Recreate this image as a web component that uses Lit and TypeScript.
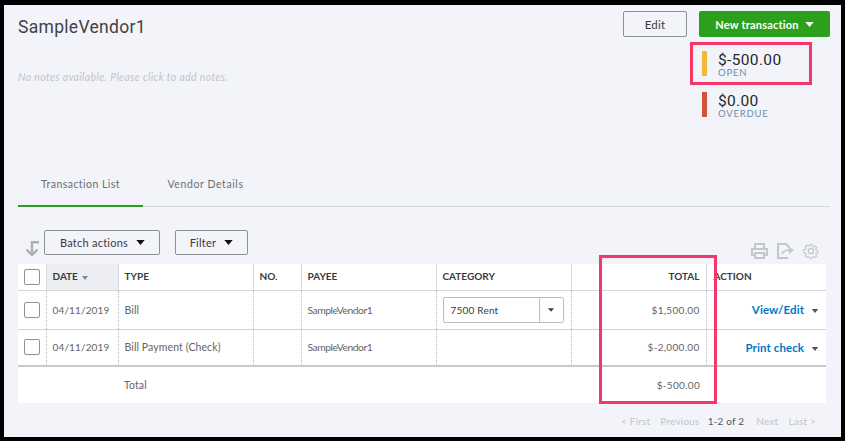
import { LitElement, html, css } from "lit";
import { customElement } from "lit/decorators.js";

const caret = html`<svg class="caret" viewBox="0 0 10 6" width="10" height="6"><path d="M0 0h10L5 6z" fill="currentColor"></path></svg>`;

@customElement("app-root")
export class AppRoot extends LitElement {
  static styles = css`
    :host { display: block; width: 845px; height: 441px; background: #000; box-sizing: border-box; padding: 5px 4px 4px 4px; font-family: Lato, "Open Sans", "Liberation Sans", sans-serif; position: relative; overflow: hidden; }
    .panel { background: #f3f4f9; height: 432px; box-sizing: border-box; padding: 0 11px 0 14px; display: flex; flex-direction: column; }
    .head { display: flex; justify-content: space-between; height: 156px; }
    .title { font: 400 17.5px/22px Roboto, sans-serif; letter-spacing: 0.3px; color: #404248; margin-top: 11px; }
    .notes { font-size: 10.5px; line-height: 12px; font-style: italic; color: #c2c4c8; margin-top: 33px; letter-spacing: 0.36px; }
    .right { display: flex; flex-direction: column; align-items: flex-start; width: 207px; }
    .btns { display: flex; gap: 12px; margin-top: 6px; }
    .edit { width: 64px; height: 26px; box-sizing: border-box; border: 1px solid #8d9096; border-radius: 2px; font-size: 11.5px; color: #393a3d; display: flex; align-items: center; justify-content: center; letter-spacing: 0.2px; }
    .new { width: 131px; height: 26px; box-sizing: border-box; background: #2ca01c; border-radius: 2px; color: #fff; font-size: 11px; font-weight: 700; letter-spacing: 0.2px; display: flex; align-items: center; justify-content: center; gap: 6px; }
    .new .caret { width: 9px; height: 5px; }
    .stat { display: flex; gap: 11px; margin-left: 79px; height: 25px; }
    .stat.first { margin-top: 14px; margin-bottom: 16px; }
    .bar { width: 5px; height: 25px; }
    .amt { font: 400 15.5px/15px Roboto, sans-serif; letter-spacing: 0.35px; color: #26282c; margin-top: 2px; }
    .lbl { font-size: 9.5px; line-height: 10px; letter-spacing: 0.8px; color: #6b8cae; }
    .tabs { display: flex; height: 46px; border-bottom: 1px solid #d4d7dc; box-sizing: border-box; }
    .tab { font-size: 10.5px; color: #6b6c72; line-height: 14px; padding-top: 16px; box-sizing: border-box; height: 46px; text-align: center; letter-spacing: 0.45px; }
    .tab.on { width: 125px; border-bottom: 2px solid #2ca01c; }
    .tab.off { width: 125px; letter-spacing: 0.6px; }
    .tools { display: flex; align-items: flex-end; height: 57px; padding-bottom: 9px; box-sizing: border-box; }
    .arrow { width: 14px; height: 15px; margin: 0 5px -1px 7px; }
    .tbtn { height: 25px; box-sizing: border-box; border: 1px solid #8d9096; border-radius: 2px; font-size: 11px; color: #393a3d; display: flex; align-items: center; justify-content: center; gap: 8px; letter-spacing: 0.25px; }
    .tbtn .caret { width: 9px; height: 5px; color: #111; }
    .batch { width: 116px; margin-right: 15px; padding-left: 1px; }
    .filter { width: 73px; }
    .icons { margin-left: auto; margin-right: 11px; display: flex; gap: 9px; color: #c3c6ca; margin-bottom: -4px; }
    table { width: 808px; border-collapse: collapse; table-layout: fixed; background: #fff; font-size: 10.5px; color: #636468; letter-spacing: 0.1px; }
    th { height: 26px; font-size: 10px; font-weight: 700; color: #393a3d; text-align: left; padding: 0 6px 1px; box-sizing: border-box; border-left: 1px solid #d8dade; border-bottom: 1px solid #d4d7dc; letter-spacing: 0; }
    td { padding: 0 6px; box-sizing: border-box; border-left: 1px dotted #b9bbbf; border-bottom: 1px solid #d0d2d6; white-space: nowrap; }
    tr.r1 td { height: 39px; }
    tr.r2 td { height: 37px; border-bottom: 2px solid #c8cacd; }
    tr.tot td { height: 37px; border: none; }
    th:first-child, td:first-child { border-left: none; padding: 0; }
    th.date { background: #eceef1; }
    th.date svg { width: 6px; height: 4px; color: #6b8cae; margin-left: 2px; }
    td.dt { font-size: 10px; letter-spacing: 0.15px; }
    td.py { font-size: 10.3px; letter-spacing: -0.45px; }
    .num { text-align: right; font-size: 10px; letter-spacing: 0.3px; }
    th.num { letter-spacing: 0; }
    .cb { width: 16px; height: 16px; box-sizing: border-box; border: 1px solid #8d9096; border-radius: 2px; margin-left: 6px; background: #fff; display: block; }
    .sel { display: flex; width: 121px; height: 26px; box-sizing: border-box; border: 1px solid #babec5; border-radius: 2px; align-items: center; color: #393a3d; font-size: 10px; letter-spacing: 0.2px; }
    .sel span { flex: 1; padding-left: 7px; }
    .sel i { width: 23px; height: 24px; border-left: 1px solid #babec5; display: flex; align-items: center; justify-content: center; color: #393a3d; }
    .sel .caret { width: 6px; height: 4px; }
    .act { text-align: right; padding-right: 7px; color: #0077c5; font-size: 11.5px; font-weight: 700; }
    .act .caret { width: 8px; height: 4px; color: #55575c; margin: 0 0 1px 4px; }
    .act-head { padding-left: 7px; }
    .pager { display: flex; justify-content: flex-end; gap: 10px; font-size: 10px; color: #c1c3c8; margin-top: 12px; padding-right: 14px; line-height: 13px; letter-spacing: 0.2px; }
    .pager b { font-weight: 400; color: #55575c; margin: 0 2px 0 -2px; }
    .mark { position: absolute; border: 3px solid #f5386b; box-sizing: border-box; pointer-events: none; }
    .m1 { left: 690px; top: 42px; width: 122px; height: 43px; }
    .m2 { left: 599px; top: 255px; width: 118px; height: 149px; }
  `;

  render() {
    return html`
      <div class="panel">
        <div class="head">
          <div>
            <div class="title">SampleVendor1</div>
            <div class="notes">No notes available. Please click to add notes.</div>
          </div>
          <div class="right">
            <div class="btns">
              <div class="edit">Edit</div>
              <div class="new">New transaction ${caret}</div>
            </div>
            <div class="stat first">
              <div class="bar" style="background:#f4b73a"></div>
              <div><div class="amt">$-500.00</div><div class="lbl">OPEN</div></div>
            </div>
            <div class="stat">
              <div class="bar" style="background:#d1533a"></div>
              <div><div class="amt">$0.00</div><div class="lbl">OVERDUE</div></div>
            </div>
          </div>
        </div>
        <div class="tabs">
          <div class="tab on">Transaction List</div>
          <div class="tab off">Vendor Details</div>
        </div>
        <div class="tools">
          <svg class="arrow" viewBox="0 0 14 15" fill="none" stroke="#adafb3" stroke-width="2.4"><path d="M14 1.2H7v12.5M1.5 8.5L7 14l5.5-5.5"></path></svg>
          <div class="tbtn batch">Batch actions ${caret}</div>
          <div class="tbtn filter">Filter ${caret}</div>
          <div class="icons">
            <svg width="17" height="16" viewBox="0 0 17 16" fill="none" stroke="currentColor" stroke-width="2"><path d="M4 5V1h9v4M4 12H1V6h15v6h-3"></path><path d="M4 10h9v5H4z"></path></svg>
            <svg width="17" height="16" viewBox="0 0 17 16" fill="none" stroke="currentColor" stroke-width="2"><path d="M11 15H1V1h8l3 3v1"></path><path d="M5 11c1-3 4-4 8-4" stroke-width="1.6"></path><path d="M12 4l5 3-5 4z" fill="currentColor" stroke="none"></path></svg>
            <svg width="16" height="16" viewBox="0 0 16 16" fill="none" stroke="currentColor" stroke-width="1.2"><circle cx="8" cy="8" r="2.6"></circle><path d="M6.8 1h2.4l.4 2 1.3.6 1.8-1.1 1.6 1.7-1.1 1.7.6 1.4 2 .4v2.4l-2 .4-.6 1.3 1.1 1.8-1.7 1.6-1.7-1.1-1.4.6-.4 2H6.8l-.4-2-1.3-.6-1.8 1.1-1.6-1.7 1.1-1.7-.6-1.4-2-.4V6.6l2-.4.6-1.3-1.1-1.8 1.7-1.6 1.7 1.1 1.4-.6z" transform="translate(.7 .7) scale(.91)"></path></svg>
          </div>
        </div>
        <table>
          <colgroup>
            <col style="width:28px" /><col style="width:72px" /><col style="width:135px" /><col style="width:48px" /><col style="width:135px" /><col style="width:135px" /><col style="width:135px" /><col style="width:120px" />
          </colgroup>
          <tr>
            <th><span class="cb"></span></th>
            <th class="date">DATE <svg viewBox="0 0 6 4"><path d="M0 0h6L3 4z" fill="currentColor"></path></svg></th>
            <th>TYPE</th><th>NO.</th><th>PAYEE</th><th>CATEGORY</th><th class="num">TOTAL</th><th class="act-head">ACTION</th>
          </tr>
          <tr class="r1">
            <td><span class="cb"></span></td><td class="dt">04/11/2019</td><td>Bill</td><td></td><td class="py">SampleVendor1</td>
            <td><div class="sel"><span>7500 Rent</span><i>${caret}</i></div></td>
            <td class="num">$1,500.00</td><td class="act">View/Edit ${caret}</td>
          </tr>
          <tr class="r2">
            <td><span class="cb"></span></td><td class="dt">04/11/2019</td><td>Bill Payment (Check)</td><td></td><td class="py">SampleVendor1</td><td></td>
            <td class="num">$-2,000.00</td><td class="act">Print check ${caret}</td>
          </tr>
          <tr class="tot">
            <td></td><td></td><td>Total</td><td></td><td></td><td></td><td class="num">$-500.00</td><td></td>
          </tr>
        </table>
        <div class="pager"><span>&lt; First</span><span>Previous</span><b>1-2 of 2</b><span>Next</span><span>Last &gt;</span></div>
      </div>
      <div class="mark m1"></div>
      <div class="mark m2"></div>
    `;
  }
}
